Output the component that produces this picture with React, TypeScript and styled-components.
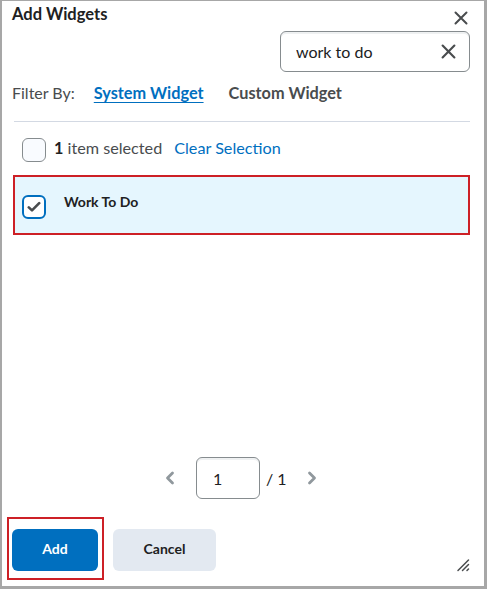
import React, { useState } from "react";
import styled, { createGlobalStyle } from "styled-components";

const GlobalStyle = createGlobalStyle`
  html, body {
    margin: 0;
    padding: 0;
    background: #ffffff;
  }
  body {
    font-family: Lato, "Open Sans", "Liberation Sans", sans-serif;
    color: #202122;
  }
  * {
    box-sizing: border-box;
  }
`;

const Dialog = styled.div`
  position: relative;
  width: 487px;
  height: 589px;
  display: flex;
  flex-direction: column;
  background: #ffffff;
  border-style: solid;
  border-color: #a7a7a7;
  border-width: 1px 3px 3px 2px;
  padding: 0 14px 6px 10px;
`;

const Header = styled.div`
  height: 30px;
  display: flex;
  justify-content: space-between;
  align-items: flex-start;
`;

const Title = styled.h2`
  margin: 0;
  padding-top: 3px;
  font-size: 16.5px;
  line-height: 20px;
  font-weight: 700;
  color: #202122;
`;

const IconButton = styled.button`
  background: none;
  border: none;
  padding: 0;
  display: flex;
  align-items: center;
  justify-content: center;
  cursor: pointer;
  color: #494c4e;
`;

const CloseButton = styled(IconButton)`
  width: 14px;
  height: 14px;
  margin-top: 10px;
  margin-right: 2px;
`;

const SearchRow = styled.div`
  display: flex;
  justify-content: flex-end;
`;

const SearchBox = styled.div`
  width: 190px;
  height: 41px;
  display: flex;
  align-items: center;
  border: 1px solid #868c8f;
  border-radius: 6px;
  box-shadow: inset 0 2px 0 0 rgba(177, 185, 190, 0.2);
  padding: 0 13px 0 15px;
`;

const SearchInput = styled.input`
  flex: 1;
  min-width: 0;
  border: none;
  outline: none;
  background: transparent;
  font-family: inherit;
  font-size: 16px;
  color: #202122;
  padding: 0;
`;

const FilterRow = styled.div`
  height: 40px;
  display: flex;
  align-items: center;
  font-size: 16px;
  color: #494c4e;
`;

const FilterLabel = styled.span`
  margin-right: 19px;
`;

const FilterOption = styled.button<{ $active?: boolean }>`
  background: none;
  border: none;
  padding: 0;
  margin-right: 25px;
  font-family: inherit;
  font-size: 16.3px;
  font-weight: 700;
  cursor: pointer;
  color: ${(p) => (p.$active ? "#006fbf" : "#494c4e")};
  text-decoration: ${(p) => (p.$active ? "underline" : "none")};
  text-underline-offset: 3px;
`;

const Divider = styled.hr`
  margin: 9px 0 0 2px;
  border: none;
  border-top: 1px solid #d3d9e3;
`;

const SelectionBar = styled.div`
  display: flex;
  align-items: center;
  padding: 16px 0 0 10px;
  font-size: 16.2px;
  color: #494c4e;
  gap: 8px;
`;

const SelectionText = styled.span`
  padding-bottom: 5px;
`;

const Count = styled.b`
  color: #202122;
`;

const LinkButton = styled.button`
  background: none;
  border: none;
  padding: 0 0 5px;
  margin-left: 4px;
  font-family: inherit;
  font-size: 16.2px;
  color: #006fbf;
  cursor: pointer;
`;

const Box = styled.span<{ $checked?: boolean }>`
  flex: none;
  width: 24px;
  height: 24px;
  border-radius: 6px;
  display: flex;
  align-items: center;
  justify-content: center;
  background: ${(p) => (p.$checked ? "#ffffff" : "#f9fbff")};
  border: ${(p) => (p.$checked ? "2px solid #006fbf" : "1px solid #868c8f")};
  color: #494c4e;
`;

const List = styled.ul`
  list-style: none;
  margin: 13px 0 0 1px;
  padding: 0;
`;

const Item = styled.li<{ $selected?: boolean }>`
  height: 60px;
  display: flex;
  align-items: flex-start;
  gap: 18px;
  padding: 18px 0 0 7px;
  border: 2px solid ${(p) => (p.$selected ? "#cd2026" : "transparent")};
  background: ${(p) => (p.$selected ? "#e5f6fe" : "#ffffff")};
  cursor: pointer;
`;

const ItemName = styled.span`
  font-size: 14px;
  font-weight: 700;
  line-height: 16px;
  margin-top: -1px;
  color: #202122;
`;

const Spacer = styled.div`
  flex: 1;
`;

const Pager = styled.div`
  display: flex;
  align-items: center;
  justify-content: center;
  font-size: 16px;
  color: #202122;
`;

const PageArrow = styled(IconButton)<{ $side: "left" | "right" }>`
  width: 10px;
  height: 30px;
  color: #90989d;
  margin: ${(p) => (p.$side === "left" ? "0 21px 0 0" : "0 0 0 20px")};
`;

const PageInput = styled.input`
  width: 64px;
  height: 42px;
  margin: 0 6px 0 0;
  border: 1px solid #868c8f;
  border-radius: 6px;
  box-shadow: inset 0 2px 0 0 rgba(177, 185, 190, 0.2);
  padding: 0 0 0 16px;
  font-family: inherit;
  font-size: 16px;
  color: #202122;
  outline: none;
`;

const PageTotal = styled.span`
  width: 21px;
`;

const Footer = styled.div`
  display: flex;
  align-items: flex-end;
  margin: 18px 0 0 -5px;
`;

const Highlight = styled.div`
  border: 2px solid #cd2026;
  padding: 10px 4px 7px 3px;
`;

const Button = styled.button<{ $primary?: boolean }>`
  height: 42px;
  border: none;
  border-radius: 6px;
  font-family: inherit;
  font-size: 14px;
  font-weight: 700;
  cursor: pointer;
  padding: 0 0 3px;
  background: ${(p) => (p.$primary ? "#006fbf" : "#e3e9f1")};
  color: ${(p) => (p.$primary ? "#ffffff" : "#202122")};
  width: ${(p) => (p.$primary ? "86px" : "103px")};
`;

const CancelButton = styled(Button)`
  margin: 0 0 9px 9px;
`;

const Grip = styled.span`
  position: absolute;
  right: 14px;
  bottom: 14px;
  width: 14px;
  height: 14px;
  display: flex;
  color: #494c4e;
`;

const XIcon = ({ size }: { size: number }) => (
  <svg width={size} height={size} viewBox="0 0 14 14" fill="none">
    <path d="M1.5 1.5 12.5 12.5M12.5 1.5 1.5 12.5" stroke="currentColor" strokeWidth="2" strokeLinecap="round" />
  </svg>
);

const Chevron = ({ dir }: { dir: "left" | "right" }) => (
  <svg width="10" height="14" viewBox="0 0 10 14" fill="none">
    <path
      d={dir === "left" ? "M7.5 2 2.5 7 7.5 12" : "M2.5 2 7.5 7 2.5 12"}
      stroke="currentColor"
      strokeWidth="2.8"
      strokeLinecap="round"
      strokeLinejoin="round"
    />
  </svg>
);

const Check = () => (
  <svg width="14" height="12" viewBox="0 0 14 12" fill="none">
    <path d="M1.8 6.4 5 9.4 12.2 2.2" stroke="currentColor" strokeWidth="2.6" strokeLinecap="round" strokeLinejoin="round" />
  </svg>
);

export default function App() {
  const [query, setQuery] = useState("work to do");
  const [filter, setFilter] = useState<"system" | "custom">("system");
  const [selected, setSelected] = useState(true);
  const [page, setPage] = useState("1");

  return (
    <>
      <GlobalStyle />
      <Dialog>
        <Header>
          <Title>Add Widgets</Title>
          <CloseButton aria-label="Close">
            <XIcon size={14} />
          </CloseButton>
        </Header>

        <SearchRow>
          <SearchBox>
            <SearchInput value={query} onChange={(e) => setQuery(e.target.value)} />
            <IconButton aria-label="Clear search" onClick={() => setQuery("")}>
              <XIcon size={15} />
            </IconButton>
          </SearchBox>
        </SearchRow>

        <FilterRow>
          <FilterLabel>Filter By:</FilterLabel>
          <FilterOption $active={filter === "system"} onClick={() => setFilter("system")}>
            System Widget
          </FilterOption>
          <FilterOption $active={filter === "custom"} onClick={() => setFilter("custom")}>
            Custom Widget
          </FilterOption>
        </FilterRow>

        <Divider />

        <SelectionBar>
          <Box />
          <SelectionText>
            <Count>{selected ? 1 : 0}</Count> item selected
          </SelectionText>
          <LinkButton onClick={() => setSelected(false)}>Clear Selection</LinkButton>
        </SelectionBar>

        <List>
          <Item $selected={selected} onClick={() => setSelected(!selected)}>
            <Box $checked={selected}>{selected && <Check />}</Box>
            <ItemName>Work To Do</ItemName>
          </Item>
        </List>

        <Spacer />

        <Pager>
          <PageArrow $side="left" aria-label="Previous page">
            <Chevron dir="left" />
          </PageArrow>
          <PageInput value={page} onChange={(e) => setPage(e.target.value)} />
          <PageTotal>/ 1</PageTotal>
          <PageArrow $side="right" aria-label="Next page">
            <Chevron dir="right" />
          </PageArrow>
        </Pager>

        <Footer>
          <Highlight>
            <Button $primary>Add</Button>
          </Highlight>
          <CancelButton>Cancel</CancelButton>
        </Footer>

        <Grip>
          <svg width="14" height="14" viewBox="0 0 14 14" fill="none">
            <path d="M2 12.5 12.5 2M6.5 12.5 12.5 6.5M11 12.5 12.5 11" stroke="currentColor" strokeWidth="1.5" strokeLinecap="round" />
          </svg>
        </Grip>
      </Dialog>
    </>
  );
}
